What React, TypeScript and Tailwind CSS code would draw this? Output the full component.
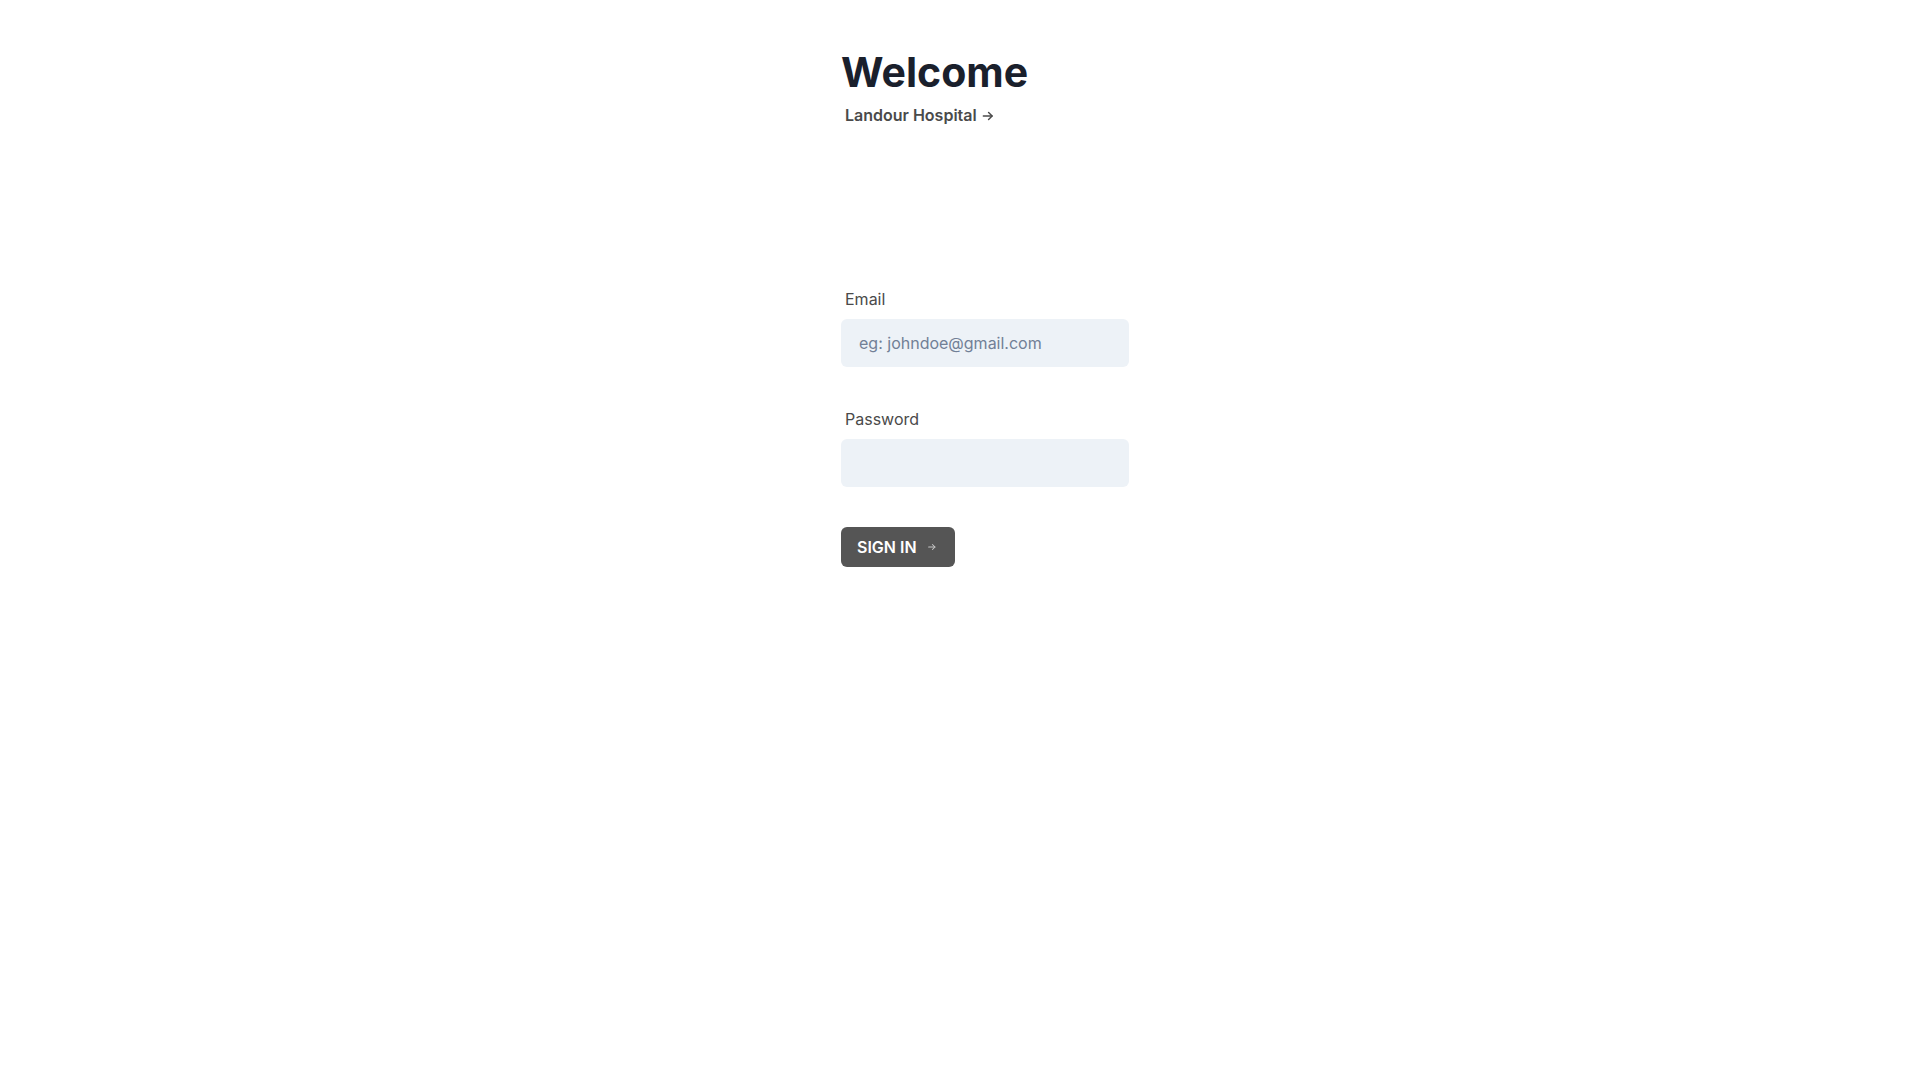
import React, { useState } from 'react'

const ArrowRight = ({ className }: { className?: string }) => (
  <svg viewBox="0 0 24 24" fill="none" stroke="currentColor" strokeWidth={2.5} strokeLinecap="round" strokeLinejoin="round" className={className}>
    <path d="M4 12h15" />
    <path d="M13 6l6 6-6 6" />
  </svg>
)

const App: React.FC = () => {
  const [email, setEmail] = useState('')
  const [password, setPassword] = useState('')

  return (
    <div className="min-h-[1120px] bg-white font-['Inter',sans-serif]">
      <div className="pl-[841px] pt-[48px]">
        {/* Header */}
        <h1 className="text-[41px] leading-[1.2] font-bold text-[#1a202c]">Welcome</h1>
        <p className="mt-[6px] ml-1 flex items-center gap-1 text-base leading-6 font-semibold text-[#4a4a4a]">
          Landour Hospital
          <ArrowRight className="w-[14px] h-[14px] mt-[1px]" />
        </p>

        {/* Form */}
        <form className="mt-[160px] w-[288px]" onSubmit={(e) => e.preventDefault()}>
          <div>
            <label className="block ml-1 mb-2 text-base leading-6 text-[#4a4a4a]">Email</label>
            <input
              type="email"
              value={email}
              onChange={(e) => setEmail(e.target.value)}
              placeholder="eg: johndoe@gmail.com"
              className="w-full h-12 px-4 rounded-md border-2 border-transparent bg-[#edf2f7] text-base text-[#1a202c] placeholder:text-[#718096] outline-none"
            />
          </div>

          <div className="mt-10">
            <label className="block ml-1 mb-2 text-base leading-6 text-[#4a4a4a]">Password</label>
            <input
              type="password"
              value={password}
              onChange={(e) => setPassword(e.target.value)}
              className="w-full h-12 px-4 rounded-md border-2 border-transparent bg-[#edf2f7] text-base text-[#1a202c] outline-none"
            />
          </div>

          <button
            type="submit"
            className="mt-10 h-10 w-[114px] pl-4 flex items-center rounded-md bg-[#555555] text-white text-base font-semibold"
          >
            SIGN IN
            <ArrowRight className="ml-[10px] w-[10px] h-[10px] text-[#c8c8c8]" />
          </button>
        </form>
      </div>
    </div>
  )
}

export default App
